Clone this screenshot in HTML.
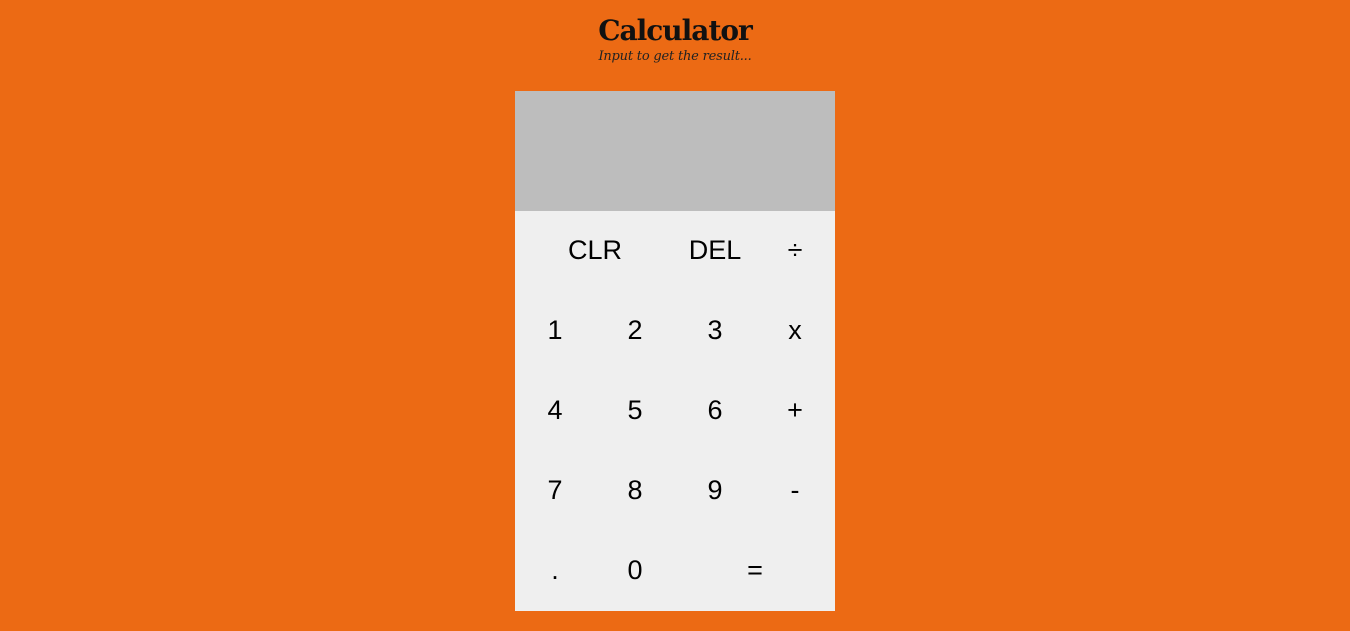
<!DOCTYPE html>
<html><head><style>
html,body{margin:0;padding:0}
body{width:1350px;height:631px;background:#ec6a14;position:relative;overflow:hidden;font-family:"Liberation Sans",sans-serif}
h1{position:absolute;top:14px;left:0;width:1350px;text-align:center;margin:0;font:bold 28px "DejaVu Serif","Liberation Serif",serif;color:#111;letter-spacing:-1px}
.sub{position:absolute;top:49px;left:0;width:1350px;text-align:center;font:italic 13px "DejaVu Serif","Liberation Serif",serif;color:#222;letter-spacing:-0.2px}
.calc{position:absolute;left:515px;top:91px;width:320px;height:520px;background:#efefef}
.disp{height:120px;background:#bdbdbd}
.b{position:absolute;width:80px;height:80px;line-height:78px;text-align:center;font-size:27px;color:#000}
</style></head><body>
<h1>Calculator</h1>
<div class="sub">Input to get the result...</div>
<div class="calc"><div class="disp"></div>
<div class="b" style="left:0;top:120px;width:160px">CLR</div>
<div class="b" style="left:160px;top:120px">DEL</div>
<div class="b" style="left:240px;top:120px">÷</div>
<div class="b" style="left:0;top:200px">1</div>
<div class="b" style="left:80px;top:200px">2</div>
<div class="b" style="left:160px;top:200px">3</div>
<div class="b" style="left:240px;top:200px">x</div>
<div class="b" style="left:0;top:280px">4</div>
<div class="b" style="left:80px;top:280px">5</div>
<div class="b" style="left:160px;top:280px">6</div>
<div class="b" style="left:240px;top:280px">+</div>
<div class="b" style="left:0;top:360px">7</div>
<div class="b" style="left:80px;top:360px">8</div>
<div class="b" style="left:160px;top:360px">9</div>
<div class="b" style="left:240px;top:360px">-</div>
<div class="b" style="left:0;top:440px">.</div>
<div class="b" style="left:80px;top:440px">0</div>
<div class="b" style="left:160px;top:440px;width:160px">=</div>
</div>
</body></html>
